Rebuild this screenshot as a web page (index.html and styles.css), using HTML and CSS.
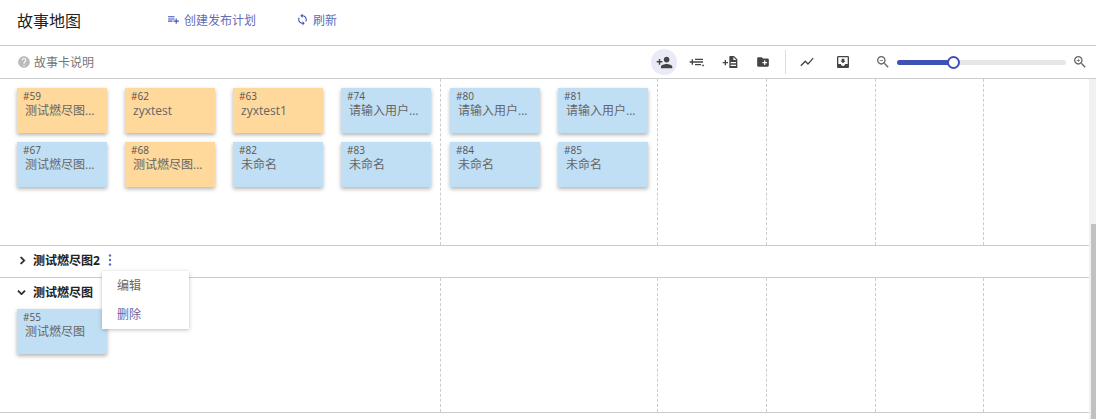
FILE: index.html
```html
<!DOCTYPE html>
<html lang="zh-CN">
<head>
    <meta charset="UTF-8">
    <title>故事地图</title>
    <link rel="stylesheet" href="styles.css">
</head>
<body>
<div class="header">
    <h1 class="page-title">故事地图</h1>
    <a class="head-link link-plan">
        <svg class="head-icon" viewBox="0 0 24 24"><path d="M14 10H2v2h12v-2zm0-4H2v2h12V6zm4 8v-4h-2v4h-4v2h4v4h2v-4h4v-2h-4zM2 16h8v-2H2v2z"/></svg>
        创建发布计划
    </a>
    <a class="head-link">
        <svg class="head-icon" viewBox="0 0 24 24"><path d="M12 4V1L8 5l4 4V6c3.31 0 6 2.69 6 6 0 1.01-.25 1.97-.7 2.8l1.46 1.46C19.54 15.03 20 13.57 20 12c0-4.42-3.58-8-8-8zm0 14c-3.31 0-6-2.69-6-6 0-1.01.25-1.97.7-2.8L5.24 7.74C4.46 8.97 4 10.43 4 12c0 4.42 3.58 8 8 8v3l4-4-4-4v3z"/></svg>
        刷新
    </a>
</div>
<div class="toolbar">
    <div class="legend">
        <svg class="legend-icon" viewBox="0 0 24 24"><path d="M12 2C6.48 2 2 6.48 2 12s4.48 10 10 10 10-4.48 10-10S17.52 2 12 2zm1 17h-2v-2h2v2zm2.07-7.75l-.9.92C13.45 12.9 13 13.5 13 15h-2v-.5c0-1.1.45-2.1 1.17-2.83l1.24-1.26c.37-.36.59-.86.59-1.41 0-1.1-.9-2-2-2s-2 .9-2 2H8c0-2.21 1.79-4 4-4s4 1.79 4 4c0 .88-.36 1.68-.93 2.25z"/></svg>
        故事卡说明
    </div>
    <div class="tools">
        <span class="tool tool-active"><svg viewBox="0 0 24 24"><path d="M15 12c2.21 0 4-1.79 4-4s-1.79-4-4-4-4 1.79-4 4 1.79 4 4 4zm-9-2V7H4v3H1v2h3v3h2v-3h3v-2H6zm9 4c-2.67 0-8 1.34-8 4v2h16v-2c0-2.66-5.33-4-8-4z"/></svg></span>
        <span class="tool"><svg viewBox="0 0 24 24"><path d="M9 7h12v2H9zM9 11h12v2H9zM9 15h9v2H9zM1 11h3V8h2v3h3v2H6v3H4v-3H1zM19 16h4l-2 3z"/></svg></span>
        <span class="tool"><svg viewBox="0 0 24 24"><path d="M1 12h3V9h2v3h3v2H6v3H4v-3H1zM12 3h6l5 5v13H11V4a1 1 0 0 1 1-1zm5 1.5V9h4.5zM13 12v2h8v-2zm0 4v2h8v-2z"/></svg></span>
        <span class="tool tool-folder"><svg viewBox="0 0 24 24"><path d="M20 6h-8l-2-2H4c-1.11 0-1.99.89-1.99 2L2 18c0 1.11.89 2 2 2h16c1.11 0 2-.89 2-2V8c0-1.11-.89-2-2-2zm-1 8h-3v3h-2v-3h-3v-2h3V9h2v3h3v2z"/></svg></span>
        <span class="tool-sep"></span>
        <span class="tool tool-chart"><svg viewBox="0 0 24 24"><path d="M3.5 18.49l6-6.01 4 4L22 6.92l-1.41-1.41-7.09 7.97-4-4L2 16.99z"/></svg></span>
        <span class="tool tool-inbox"><svg viewBox="0 0 24 24"><path d="M19 3H4.99c-1.11 0-1.98.9-1.98 2L3 19c0 1.1.88 2 1.99 2H19c1.1 0 2-.9 2-2V5c0-1.1-.9-2-2-2zm0 12h-4c0 1.66-1.35 3-3 3s-3-1.34-3-3H4.99V5H19v10zm-3-5h-2V7h-4v3H8l4 4 4-4z"/></svg></span>
        <div class="zoom">
            <svg class="zoom-icon" viewBox="0 0 24 24"><path d="M15.5 14h-.79l-.28-.27C15.41 12.59 16 11.11 16 9.5 16 5.91 13.09 3 9.5 3S3 5.91 3 9.5 5.91 16 9.5 16c1.61 0 3.09-.59 4.23-1.57l.27.28v.79l5 4.99L20.49 19l-4.99-5zm-6 0C7.01 14 5 11.99 5 9.5S7.01 5 9.5 5 14 7.01 14 9.5 11.99 14 9.5 14zM7 9h5v1H7z"/></svg>
            <div class="slider"><div class="slider-fill"></div><div class="slider-thumb"></div></div>
            <svg class="zoom-icon" viewBox="0 0 24 24"><path d="M15.5 14h-.79l-.28-.27C15.41 12.59 16 11.11 16 9.5 16 5.91 13.09 3 9.5 3S3 5.91 3 9.5 5.91 16 9.5 16c1.61 0 3.09-.59 4.23-1.57l.27.28v.79l5 4.99L20.49 19l-4.99-5zm-6 0C7.01 14 5 11.99 5 9.5S7.01 5 9.5 5 14 7.01 14 9.5 11.99 14 9.5 14zM12 10h-2v2H9v-2H7V9h2V7h1v2h2v1z"/></svg>
        </div>
    </div>
</div>
<div class="board">
    <div class="lanes">
        <div class="lane lane-first">
            <div class="col col-wide cards">
                <div class="card card-orange"><span class="card-no">#59</span><span class="card-name">测试燃尽图...</span></div>
                <div class="card card-orange"><span class="card-no">#62</span><span class="card-name">zyxtest</span></div>
                <div class="card card-orange"><span class="card-no">#63</span><span class="card-name">zyxtest1</span></div>
                <div class="card card-blue"><span class="card-no">#74</span><span class="card-name">请输入用户...</span></div>
                <div class="card card-blue"><span class="card-no">#67</span><span class="card-name">测试燃尽图...</span></div>
                <div class="card card-orange"><span class="card-no">#68</span><span class="card-name">测试燃尽图...</span></div>
                <div class="card card-blue"><span class="card-no">#82</span><span class="card-name">未命名</span></div>
                <div class="card card-blue"><span class="card-no">#83</span><span class="card-name">未命名</span></div>
            </div>
            <div class="col col-mid cards">
                <div class="card card-blue"><span class="card-no">#80</span><span class="card-name">请输入用户...</span></div>
                <div class="card card-blue"><span class="card-no">#81</span><span class="card-name">请输入用户...</span></div>
                <div class="card card-blue"><span class="card-no">#84</span><span class="card-name">未命名</span></div>
                <div class="card card-blue"><span class="card-no">#85</span><span class="card-name">未命名</span></div>
            </div>
            <div class="col"></div>
            <div class="col"></div>
            <div class="col"></div>
            <div class="col col-last"></div>
        </div>
        <div class="lane-closed">
            <svg class="chevron" viewBox="0 0 24 24"><path d="M10 6L8.59 7.41 13.17 12l-4.58 4.59L10 18l6-6z"/></svg>
            <span class="lane-title">测试燃尽图2</span>
            <svg class="kebab" viewBox="0 0 4 14"><circle cx="2" cy="2.5" r="1.2"/><circle cx="2" cy="7" r="1.2"/><circle cx="2" cy="11.5" r="1.2"/></svg>
        </div>
        <div class="lane lane-open">
            <div class="col col-wide">
                <div class="lane-head">
                    <svg class="chevron" viewBox="0 0 24 24"><path d="M16.59 8.59L12 13.17 7.41 8.59 6 10l6 6 6-6z"/></svg>
                    <span class="lane-title">测试燃尽图</span>
                </div>
                <div class="cards">
                    <div class="card card-blue"><span class="card-no">#55</span><span class="card-name">测试燃尽图</span></div>
                </div>
            </div>
            <div class="col col-mid"></div>
            <div class="col"></div>
            <div class="col"></div>
            <div class="col"></div>
            <div class="col col-last"></div>
        </div>
        <div class="menu">
            <div class="menu-item">编辑</div>
            <div class="menu-item menu-item-hover">删除</div>
        </div>
    </div>
    <div class="scrollbar"><div class="scrollbar-thumb"></div></div>
</div>
</body>
</html>
```

FILE: styles.css
```css
*{
    margin: 0;
    padding: 0;
    box-sizing: border-box;
}
html,body{
    width: 100%;
    height: 100%;
    overflow: hidden;
}
body{
    font-family: "Open Sans", "Noto Sans CJK SC", sans-serif;
    font-size: 12px;
    color: #666;
    background: #fff;
}
svg{
    display: block;
    fill: currentColor;
}

/* 顶部标题 */
.header{
    height: 46px;
    padding-left: 17px;
    display: flex;
    align-items: center;
    padding-bottom: 6px;
    border-bottom: 1px solid #ccc;
}
.page-title{
    width: 150px;
    font-size: 16px;
    font-weight: 400;
    color: #222;
}
.head-link{
    display: flex;
    align-items: center;
    gap: 4px;
    color: #5f6cb8;
}
.link-plan{
    width: 129px;
}
.head-icon{
    width: 13px;
    height: 13px;
    color: #3f51b5;
}

/* 工具栏 */
.toolbar{
    height: 33px;
    padding-left: 17px;
    display: flex;
    align-items: center;
    justify-content: space-between;
    border-bottom: 1px solid #ccc;
}
.legend{
    display: flex;
    align-items: center;
    gap: 3px;
    color: #777;
}
.legend-icon{
    width: 14px;
    height: 14px;
    color: #bbb;
}
.tools{
    display: flex;
    align-items: center;
    padding-right: 8px;
}
.tool{
    width: 26px;
    height: 26px;
    margin-right: 7px;
    display: flex;
    align-items: center;
    justify-content: center;
    border-radius: 50%;
    color: #444;
}
.tool svg{
    width: 16px;
    height: 16px;
}
.tool-active{
    background: #e8eaf6;
}
.tool-active svg{
    width: 17px;
    height: 17px;
}
.tool-folder svg{
    width: 14px;
    height: 14px;
}
.tool-sep{
    width: 1px;
    height: 24px;
    margin: 0 8px 0 2px;
    background: #ddd;
}
.tool-chart{
    margin-right: 10px;
}
.tool-inbox{
    margin-right: 19px;
}
.zoom{
    display: flex;
    align-items: center;
}
.zoom-icon{
    width: 16px;
    height: 16px;
    color: #666;
}
.slider{
    width: 169px;
    height: 5px;
    margin: 0 6px;
    position: relative;
    border-radius: 3px;
    background: #e6e6e6;
}
.slider-fill{
    width: 57px;
    height: 100%;
    border-radius: 3px;
    background: #3f51b5;
}
.slider-thumb{
    width: 13px;
    height: 13px;
    position: absolute;
    left: 50px;
    top: -4px;
    border: 2px solid #3f51b5;
    border-radius: 50%;
    background: #fff;
}

/* 泳道 */
.board{
    height: 340px;
    display: flex;
}
.lanes{
    flex: 1;
    position: relative;
}
.lane{
    display: grid;
    grid-template-columns: 441px 217px 109px 109px 108px 1fr;
    border-bottom: 1px solid #ccc;
}
.lane-first{
    height: 167px;
}
.lane-open{
    height: 135px;
}
.lane-closed{
    height: 32px;
    padding: 0 0 3px 15px;
    display: flex;
    align-items: center;
    border-bottom: 1px solid #ccc;
}
.col{
    border-right: 1px dashed #ccc;
}
.col-last{
    border-right: 0;
}
.col-wide{
    padding-left: 17px;
}
.cards{
    display: flex;
    flex-wrap: wrap;
    align-content: flex-start;
    gap: 9px 18px;
}
.lane-first .cards{
    padding-top: 9px;
}
.col-mid{
    padding-left: 9px;
}
.lane-head{
    height: 31px;
    padding-bottom: 3px;
    display: flex;
    align-items: center;
}
.lane-head .chevron{
    margin-left: -3px;
    margin-right: 4px;
}
.chevron{
    width: 15px;
    height: 15px;
    margin-right: 3px;
    color: #222;
    stroke: currentColor;
    stroke-width: 1;
}
.lane-title{
    font-weight: 700;
    color: #222;
}
.kebab{
    width: 4px;
    height: 14px;
    margin-left: 8px;
    color: #5c6bc0;
}

/* 卡片 */
.card{
    width: 90px;
    height: 45px;
    padding: 3px 0 0 6px;
    box-shadow: 0 2px 4px rgba(0,0,0,.3);
}
.card-orange{
    background: #ffd89b;
}
.card-blue{
    background: #c1dff4;
}
.card-no{
    display: block;
    font-size: 10px;
    line-height: 11px;
    color: #555;
}
.card-name{
    display: block;
    margin-left: 2px;
    line-height: 18px;
    color: #666;
    white-space: nowrap;
}

/* 弹出菜单 */
.menu{
    width: 87px;
    padding: 0 15px;
    position: absolute;
    left: 102px;
    top: 192px;
    background: #fff;
    box-shadow: 0 1px 4px rgba(0,0,0,.25);
}
.menu-item{
    height: 29px;
    line-height: 29px;
}
.menu-item-hover{
    color: #6a62a0;
}

/* 滚动条 */
.scrollbar{
    width: 7px;
    padding-top: 145px;
    padding-left: 2px;
    background: #f1f1f1;
}
.scrollbar-thumb{
    height: 100%;
    background: #c1c1c1;
}
```
